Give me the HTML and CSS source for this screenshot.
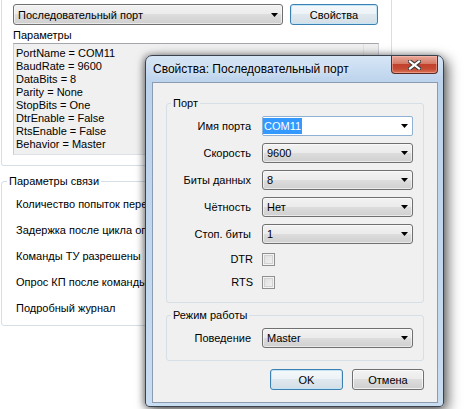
FILE: index.html
```html
<!DOCTYPE html>
<html lang="ru">
<head>
<meta charset="utf-8">
<title>Свойства: Последовательный порт</title>
<link rel="stylesheet" href="styles.css">
</head>
<body>
<div class="screen">
  <div class="panel">
    <div class="group-top">
      <div class="toprow">
        <div class="combo combo-top">
          <span class="combo-text">Последовательный порт</span>
          <svg class="arrow" width="7" height="4" viewBox="0 0 7 4"><polygon points="0,0 7,0 3.5,4" fill="#000"/></svg>
        </div>
        <button class="btn btn-focus btn-props">Свойства</button>
      </div>
      <div class="caption">Параметры</div>
      <div class="textbox">
        <div class="lines">
          <div>PortName = COM11</div>
          <div>BaudRate = 9600</div>
          <div>DataBits = 8</div>
          <div>Parity = None</div>
          <div>StopBits = One</div>
          <div>DtrEnable = False</div>
          <div>RtsEnable = False</div>
          <div>Behavior = Master</div>
        </div>
        <div class="vscroll"></div>
      </div>
    </div>
    <fieldset class="fs fs-link">
      <legend>Параметры связи</legend>
      <div class="item">Количество попыток переспроса</div>
      <div class="item">Задержка после цикла опроса</div>
      <div class="item">Команды ТУ разрешены</div>
      <div class="item">Опрос КП после команды ТУ</div>
      <div class="item">Подробный журнал</div>
    </fieldset>
  </div>

  <div class="dialog">
    <div class="titlebar">
      <div class="title">Свойства: Последовательный порт</div>
      <div class="close">
        <svg width="13" height="10" viewBox="0 0 13 10">
          <path d="M2 1.5 L11 8.5 M11 1.5 L2 8.5" stroke="#3b3b3b" stroke-width="4.2" stroke-linecap="square" fill="none"/>
          <path d="M2 1.5 L11 8.5 M11 1.5 L2 8.5" stroke="#ffffff" stroke-width="2.2" stroke-linecap="square" fill="none"/>
        </svg>
      </div>
    </div>
    <div class="client">
      <fieldset class="fs fs-dlg">
        <legend>Порт</legend>
        <div class="form form-port">
          <div class="lbl">Имя порта</div>
          <div class="combo combo-edit">
            <span class="sel">COM11</span>
            <svg class="arrow" width="7" height="4" viewBox="0 0 7 4"><polygon points="0,0 7,0 3.5,4" fill="#000"/></svg>
          </div>
          <div class="lbl">Скорость</div>
          <div class="combo"><span class="combo-text">9600</span><svg class="arrow" width="7" height="4" viewBox="0 0 7 4"><polygon points="0,0 7,0 3.5,4" fill="#000"/></svg></div>
          <div class="lbl">Биты данных</div>
          <div class="combo"><span class="combo-text">8</span><svg class="arrow" width="7" height="4" viewBox="0 0 7 4"><polygon points="0,0 7,0 3.5,4" fill="#000"/></svg></div>
          <div class="lbl">Чётность</div>
          <div class="combo"><span class="combo-text">Нет</span><svg class="arrow" width="7" height="4" viewBox="0 0 7 4"><polygon points="0,0 7,0 3.5,4" fill="#000"/></svg></div>
          <div class="lbl">Стоп. биты</div>
          <div class="combo"><span class="combo-text">1</span><svg class="arrow" width="7" height="4" viewBox="0 0 7 4"><polygon points="0,0 7,0 3.5,4" fill="#000"/></svg></div>
          <div class="lbl lbl-chk">DTR</div>
          <div class="chk-cell"><span class="chk"></span></div>
          <div class="lbl lbl-chk">RTS</div>
          <div class="chk-cell"><span class="chk"></span></div>
        </div>
      </fieldset>
      <fieldset class="fs fs-dlg fs-mode">
        <legend>Режим работы</legend>
        <div class="form form-mode">
          <div class="lbl">Поведение</div>
          <div class="combo"><span class="combo-text">Master</span><svg class="arrow" width="7" height="4" viewBox="0 0 7 4"><polygon points="0,0 7,0 3.5,4" fill="#000"/></svg></div>
        </div>
      </fieldset>
      <div class="buttons">
        <button class="btn btn-focus btn-ok">OK</button>
        <button class="btn btn-cancel">Отмена</button>
      </div>
    </div>
  </div>
</div>
</body>
</html>
```

FILE: styles.css
```css
* { box-sizing: border-box; }
html, body { margin: 0; padding: 0; }
body {
  width: 473px;
  height: 409px;
  overflow: hidden;
  background: #ffffff;
  font-family: "Liberation Sans", Arial, sans-serif;
  font-size: 11px;
  color: #000;
}
.screen { position: relative; width: 473px; height: 409px; overflow: hidden; }

/* ---------- main panel ---------- */
.panel { width: 392px; padding-left: 1px; }
.group-top {
  height: 166px;
  border: 1px solid #d5dfe5;
  border-top: none;
  border-radius: 0 0 3px 3px;
  padding: 4px 0 0 11px;
}
.toprow { display: flex; gap: 7px; height: 21px; }

.combo {
  height: 20px;
  border: 1px solid #707070;
  border-radius: 3px;
  background: linear-gradient(#f2f2f2 0%, #ebebeb 50%, #dddddd 50%, #cfcfcf 100%);
  box-shadow: inset 0 0 0 1px rgba(255,255,255,0.55);
  display: flex;
  align-items: center;
  padding-left: 4px;
  white-space: nowrap;
}
.combo-top { width: 270px; height: 21px; }
.combo-text { line-height: 14px; }
.arrow { margin-left: auto; margin-right: 4px; flex: none; }

.btn {
  height: 21px;
  border: 1px solid #707070;
  border-radius: 3px;
  background: linear-gradient(#f2f2f2 0%, #ebebeb 50%, #dddddd 50%, #cfcfcf 100%);
  box-shadow: inset 0 0 0 1px rgba(255,255,255,0.7);
  font: inherit;
  color: #000;
  padding: 0;
  text-align: center;
}
.btn-focus {
  border-color: #3c7fb1;
  box-shadow: inset 0 0 0 1px #c4e5f6;
  background: linear-gradient(#f4f8fb 0%, #ecf2f6 50%, #dfe8ee 50%, #d4dee6 100%);
}
.btn-props { width: 88px; }

.caption { line-height: 14px; margin: 3px 0 1px 0; }

.textbox {
  width: 366px;
  height: 112px;
  border: 1px solid #abadb3;
  border-color: #a4a6ac #cfd2d8 #dde1e6 #c9ccd2;
  background: #f0f0f0;
  display: flex;
}
.lines { flex: 1; padding: 3px 0 0 2px; line-height: 13px; }
.vscroll { width: 15px; border-left: 1px solid #e2e2e2; }

.fs {
  margin: 0;
  padding: 0;
  border: 1px solid #d5dfe5;
  border-radius: 3px;
  min-width: 0;
}
.fs legend { padding: 0 2px; line-height: 14px; height: 14px; }

.fs-link { width: 391px; margin-top: 8px; padding: 3px 0 4px 14px; }
.fs-link legend { margin-left: -9px; }
.item { line-height: 26px; white-space: nowrap; }

/* ---------- dialog ---------- */
.dialog {
  position: absolute;
  left: 145px;
  top: 55px;
  width: 299px;
  height: 352px;
  border: 1px solid #3a4250;
  border-radius: 7px 7px 4px 4px;
  background: linear-gradient(to bottom, #d6e6f6 0px, #bcd3ec 26px, #c2d8ee 60%, #c9ddf1 100%);
  box-shadow: 4px 4px 13px rgba(0,0,0,0.6), -2px 0 6px rgba(0,0,0,0.35);
  display: flex;
  flex-direction: column;
  padding: 0 5px 3px 6px;
}
.titlebar { height: 26px; display: flex; align-items: flex-start; }
.title {
  margin-left: 1px;
  line-height: 27px;
  font-size: 12px;
  white-space: nowrap;
  color: #000;
  text-shadow: 0 0 6px rgba(255,255,255,0.9);
}
.close {
  margin-left: auto;
  width: 47px;
  height: 18px;
  border: 1px solid #5b2a24;
  border-top: none;
  border-radius: 0 0 4px 4px;
  background: linear-gradient(#e9a99a 0%, #d47a66 45%, #c2412c 50%, #c54a33 75%, #da7354 100%);
  box-shadow: inset 0 0 0 1px rgba(255,200,190,0.45);
  display: flex;
  align-items: center;
  justify-content: center;
}

.client {
  height: 321px;
  border: 1px solid #8b9cb2;
  background: #f0f0f0;
  padding: 0 12px 0 13px;
  display: flex;
  flex-direction: column;
}
.fs-dlg { margin-top: 13px; width: 258px; }
.fs-dlg legend { margin-left: 4px; }
.fs-mode { margin-top: 5px; }

.form {
  display: grid;
  grid-template-columns: 84px 151px;
  column-gap: 11px;
  row-gap: 7px;
  padding: 6px 10px 12px 0;
}
.form-port { grid-template-rows: repeat(5, 20px) 16px 16px; }
.form-mode { grid-template-rows: 20px; }

.lbl {
  text-align: right;
  white-space: nowrap;
  align-self: center;
  line-height: 14px;
}
.lbl-chk { margin-right: -2px; }

.combo-edit {
  background: #ffffff;
  border-color: #8fb1d3;
  border-radius: 2px;
  box-shadow: none;
  padding-left: 0;
}
.sel {
  background: #3399ff;
  color: #fff;
  line-height: 16px;
  padding: 0 1px;
}

.chk-cell { display: flex; align-items: center; }
.chk {
  width: 13px;
  height: 13px;
  border: 1px solid #8e8f8f;
  background: linear-gradient(135deg, #dcdcdc 0%, #f4f4f4 100%);
  box-shadow: inset 0 0 0 1px #f4f4f4, inset 0 0 0 2px #d2d2d2;
}

.buttons {
  display: flex;
  justify-content: flex-end;
  gap: 9px;
  margin-top: 8px;
  padding-right: 1px;
}
.btn-ok { width: 73px; }
.btn-cancel { width: 72px; }
```
